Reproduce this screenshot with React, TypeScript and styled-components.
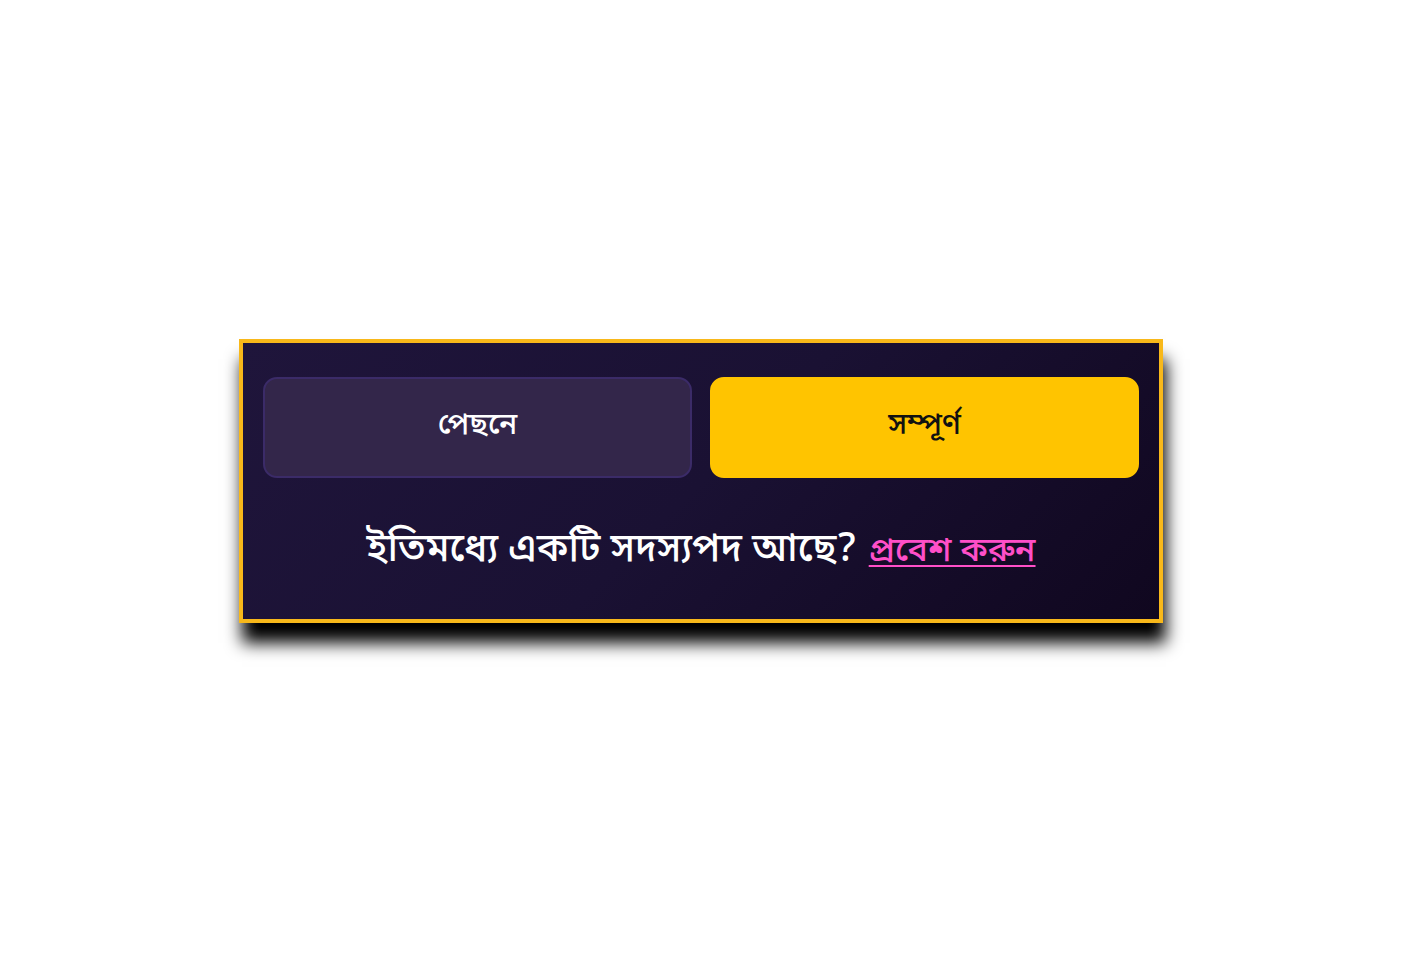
import React from "react";
import styled, { createGlobalStyle } from "styled-components";

const Global = createGlobalStyle`
  html, body { margin: 0; padding: 0; background: #ffffff; }
  body { font-family: "Noto Sans Bengali", "Lohit Bengali", "Noto Sans", "DejaVu Sans", sans-serif; }
`;

const Page = styled.div`
  width: 1404px;
  height: 961px;
  display: flex;
  align-items: flex-start;
  justify-content: flex-start;
  padding: 339px 0 0 239px;
  box-sizing: border-box;
`;

const Card = styled.div`
  width: 924px;
  height: 284px;
  box-sizing: border-box;
  border: 4px solid #f8b81a;
  background: linear-gradient(135deg, #1f153b 0%, #1a1133 50%, #10071f 100%);
  box-shadow: 3px 20px 16px rgba(0, 0, 0, 1);
  padding: 34px 20px 0 20px;
  display: flex;
  flex-direction: column;
  align-items: center;
`;

const ButtonRow = styled.div`
  width: 100%;
  display: grid;
  grid-template-columns: 1fr 1fr;
  gap: 18px;
`;

const Button = styled.button<{ $primary?: boolean }>`
  height: 101px;
  border-radius: 14px;
  box-sizing: border-box;
  border: 2px solid ${(p) => (p.$primary ? "#ffc400" : "#3b2b68")};
  background: ${(p) => (p.$primary ? "#ffc400" : "#33264a")};
  color: ${(p) => (p.$primary ? "#111111" : "#ffffff")};
  font-family: inherit;
  font-size: 30px;
  font-weight: 500;
  display: flex;
  align-items: center;
  justify-content: center;
  padding: 0 0 4px 0;
  cursor: pointer;
`;

const Footer = styled.p`
  margin: 50px 0 0 0;
  color: #ffffff;
  font-size: 39px;
  font-weight: 500;
  display: flex;
  align-items: baseline;
  gap: 12px;
  line-height: 1.2;
`;

const Link = styled.a`
  color: #ff4fc8;
  font-size: 34px;
  text-decoration: underline;
  text-decoration-thickness: 2px;
  text-underline-offset: 4px;
`;

export default function App() {
  return (
    <>
      <Global />
      <Page>
        <Card>
          <ButtonRow>
            <Button>পেছনে</Button>
            <Button $primary>সম্পূর্ণ</Button>
          </ButtonRow>
          <Footer>
            <span>ইতিমধ্যে একটি সদস্যপদ আছে?</span>
            <Link href="#">প্রবেশ করুন</Link>
          </Footer>
        </Card>
      </Page>
    </>
  );
}
